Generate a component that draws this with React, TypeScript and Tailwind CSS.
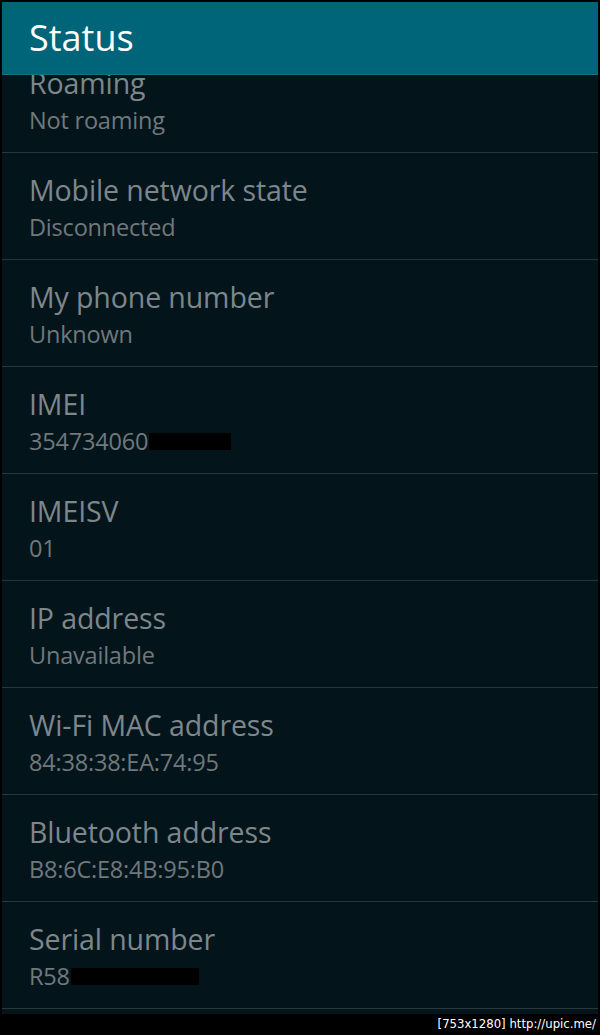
const rows: { title: string; value: string; redact?: { visible: string; width: string } }[] = [
  { title: "Roaming", value: "Not roaming" },
  { title: "Mobile network state", value: "Disconnected" },
  { title: "My phone number", value: "Unknown" },
  { title: "IMEI", value: "", redact: { visible: "354734060", width: "w-[82px]" } },
  { title: "IMEISV", value: "01" },
  { title: "IP address", value: "Unavailable" },
  { title: "Wi-Fi MAC address", value: "84:38:38:EA:74:95" },
  { title: "Bluetooth address", value: "B8:6C:E8:4B:95:B0" },
  { title: "Serial number", value: "", redact: { visible: "R58", width: "w-[128px]" } },
];

function StatusRow({ row, first }: { row: (typeof rows)[number]; first?: boolean }) {
  return (
    <div
      className={`h-[107px] shrink-0 border-b border-[#26363c] pl-[27px] pt-[19px] ${
        first ? "-mt-[29px]" : ""
      }`}
    >
      <p className="text-[28.5px] leading-[36px] tracking-[-0.1px] text-[#7d878b]">{row.title}</p>
      <p className="mt-[3px] flex items-center text-[23.5px] leading-[33px] tracking-[-0.2px] text-[#6f797d]">
        {row.redact ? (
          <>
            <span>{row.redact.visible}</span>
            <span className={`${row.redact.width} ml-[1px] h-[17px] bg-black`} />
          </>
        ) : (
          row.value
        )}
      </p>
    </div>
  );
}

export default function App() {
  return (
    <div className="flex h-[1035px] w-[600px] flex-col bg-black px-[2px] pt-[2px] font-['Open_Sans',sans-serif]">
      <div className="flex h-[73px] shrink-0 items-center border-b border-[#16707f] bg-[#006578] pl-[27px]">
        <h1 className="text-[36px] leading-none text-white">Status</h1>
      </div>
      <div className="flex h-[939px] flex-col overflow-hidden bg-[#04141b]">
        {rows.map((row, i) => (
          <StatusRow key={row.title} row={row} first={i === 0} />
        ))}
      </div>
      <div className="flex h-[20px] items-center justify-end pr-[2px] font-['DejaVu_Sans_Condensed',sans-serif] text-[13px] text-white">
        [753x1280] http://upic.me/
      </div>
    </div>
  );
}
